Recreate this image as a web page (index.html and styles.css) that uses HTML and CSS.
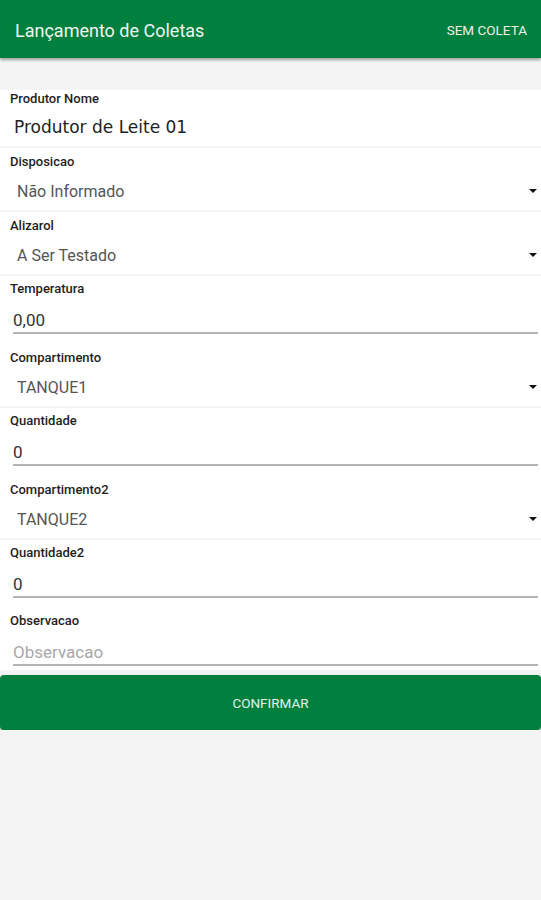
FILE: index.html
```html
<!DOCTYPE html>
<html lang="pt">
<head>
<meta charset="utf-8">
<title>Lançamento de Coletas</title>
<link rel="stylesheet" href="styles.css">
</head>
<body>
<header class="appbar">
  <h1 class="appbar-title">Lançamento de Coletas</h1>
  <span class="appbar-action">SEM COLETA</span>
</header>
<div class="band"></div>
<main class="form">
  <div class="field field-name">
    <div class="label">Produtor Nome</div>
    <div class="name-value">Produtor de Leite 01</div>
  </div>
  <div class="field field-select">
    <div class="label">Disposicao</div>
    <div class="select-row"><span class="select-value">Não Informado</span><span class="caret"></span></div>
  </div>
  <div class="field field-select">
    <div class="label">Alizarol</div>
    <div class="select-row"><span class="select-value">A Ser Testado</span><span class="caret"></span></div>
  </div>
  <div class="field field-text">
    <div class="label">Temperatura</div>
    <div class="input">0,00</div>
  </div>
  <div class="field field-select">
    <div class="label">Compartimento</div>
    <div class="select-row"><span class="select-value">TANQUE1</span><span class="caret"></span></div>
  </div>
  <div class="field field-text">
    <div class="label">Quantidade</div>
    <div class="input">0</div>
  </div>
  <div class="field field-select">
    <div class="label">Compartimento2</div>
    <div class="select-row"><span class="select-value">TANQUE2</span><span class="caret"></span></div>
  </div>
  <div class="field field-text">
    <div class="label">Quantidade2</div>
    <div class="input">0</div>
  </div>
  <div class="field field-text field-last">
    <div class="label">Observacao</div>
    <div class="input placeholder">Observacao</div>
  </div>
</main>
<button class="confirm">CONFIRMAR</button>
</body>
</html>
```
FILE: styles.css
```css
* { box-sizing: border-box; }
html, body {
  margin: 0;
  padding: 0;
  background: #f3f3f3;
  font-family: Roboto, "Liberation Sans", sans-serif;
}
.appbar {
  height: 58px;
  background: #017f3e;
  display: flex;
  align-items: center;
  justify-content: space-between;
  padding: 0 14px 0 15px;
  box-shadow: 0 2px 3px rgba(0,0,0,0.35);
  position: relative;
}
.appbar-title {
  margin: 0;
  font-size: 18px;
  font-weight: 400;
  color: #eef6f1;
  padding-top: 2px;
}
.appbar-action {
  font-size: 13.5px;
  font-weight: 400;
  color: #e6f2ea;
  padding-top: 1px;
}
.band {
  height: 32px;
  background: #f4f4f4;
}
.form {
  background: #fff;
  display: flex;
  flex-direction: column;
}
.field {
  display: flex;
  flex-direction: column;
  padding-left: 10px;
}
.label {
  font-size: 13px;
  font-weight: 500;
  line-height: 14px;
  color: #1e1e1e;
}
.field-name {
  height: 58px;
  padding-top: 2px;
  border-bottom: 2px solid #f5f5f5;
}
.name-value {
  margin-top: 9px;
  font-family: "DejaVu Sans", Verdana, sans-serif;
  font-size: 17px;
  line-height: 24px;
  color: #222;
  padding-left: 4px;
}
.field-select {
  height: 64px;
  padding-top: 7px;
  border-bottom: 2px solid #f5f5f5;
}
.select-row {
  margin-top: 13px;
  height: 20px;
  display: flex;
  align-items: center;
  justify-content: space-between;
  padding-left: 7px;
  padding-right: 4px;
}
.select-value {
  font-size: 16px;
  line-height: 20px;
  color: #555;
}
.caret {
  width: 0;
  height: 0;
  border-left: 4px solid transparent;
  border-right: 4px solid transparent;
  border-top: 4px solid #111;
  margin-top: -2px;
}
.field-text {
  height: 68px;
  padding-top: 6px;
  padding-right: 3px;
}
.input {
  margin-top: 12px;
  margin-left: 3px;
  font-size: 17px;
  line-height: 24px;
  height: 26px;
  color: #333;
  border-bottom: 2px solid #b4b4b4;
}
.placeholder {
  color: #a8a8a8;
}
.field-last {
  height: 62px;
}
.confirm {
  display: block;
  width: 100%;
  margin: 5px 0 0;
  height: 55px;
  border: none;
  border-radius: 4px;
  background: #017f3e;
  color: #e3f1e8;
  font-family: Roboto, "Liberation Sans", sans-serif;
  font-size: 13.5px;
  font-weight: 400;
  box-shadow: 0 1px 2px rgba(0,0,0,0.3);
}
```
